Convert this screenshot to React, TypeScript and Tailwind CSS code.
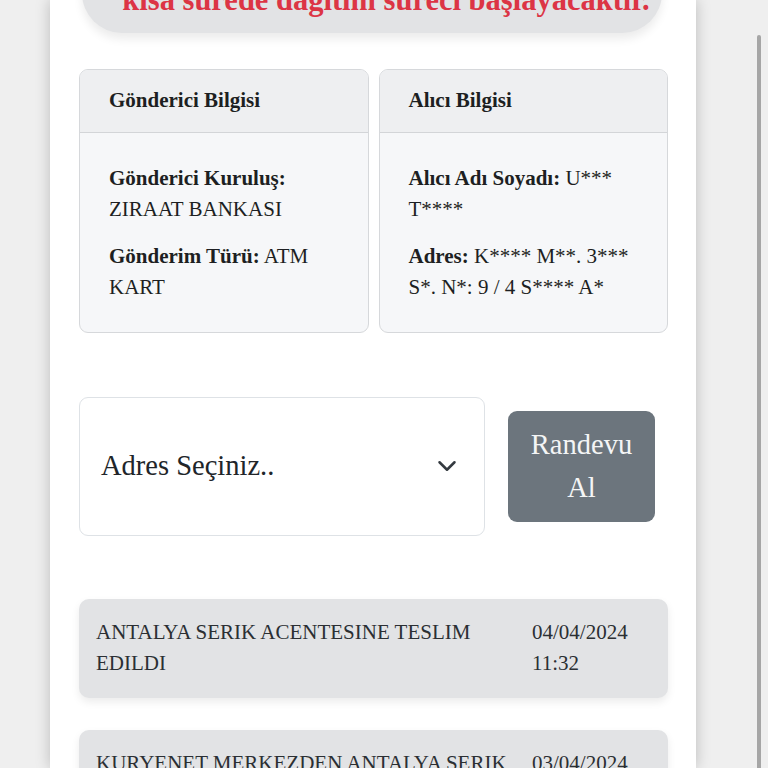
import React from "react";

// ====== Data ======
const timeline = [
  { text: "ANTALYA SERIK ACENTESINE TESLIM EDILDI", date: "04/04/2024", time: "11:32" },
  { text: "KURYENET MERKEZDEN ANTALYA SERIK ACENTESINE SEVK EDILDI", date: "03/04/2024", time: "18:05" },
];

// ====== Small pieces ======
const InfoCard: React.FC<{ title: string; children: React.ReactNode }> = ({ title, children }) => (
  <div className="flex flex-1 flex-col overflow-hidden rounded-[9px] border border-[#d6d8db] bg-[#f6f7f9]">
    <div className="border-b border-[#d3d5d8] bg-[#eeeff1] px-[29px] py-[15px] font-bold">{title}</div>
    <div className="flex flex-1 flex-col gap-[15px] px-[29px] pt-[30px] pb-[28px]">{children}</div>
  </div>
);

const Field: React.FC<{ label: string; value: string }> = ({ label, value }) => (
  <p>
    <span className="font-bold">{label}</span> {value}
  </p>
);

export default function App() {
  return (
    <div
      className="relative h-[768px] overflow-hidden bg-[#efefef] pl-[50px] text-[21px] leading-[1.5] text-[#1d1f22]"
      style={{ fontFamily: '"Liberation Serif", "Times New Roman", serif' }}
    >
      <div className="flex h-full w-[646px] flex-col bg-white pr-[28px] pl-[29px] shadow-[0_0_14px_rgba(0,0,0,0.22)]">
        {/* notice pill */}
        <div className="mt-[-18px] mr-[6px] ml-[3px] rounded-b-[40px] bg-[#e2e3e5] pb-[15px] pl-[28px] text-center text-[30.5px] font-bold leading-[36px] whitespace-nowrap text-[#dc3545] shadow-[0_6px_10px_rgba(0,0,0,0.08)]">
          kısa sürede dağıtım süreci başlayacaktır.
        </div>

        {/* sender / receiver */}
        <div className="mt-[36px] flex gap-[10px]">
          <InfoCard title="Gönderici Bilgisi">
            <Field label="Gönderici Kuruluş:" value="ZIRAAT BANKASI" />
            <Field label="Gönderim Türü:" value="ATM KART" />
          </InfoCard>
          <InfoCard title="Alıcı Bilgisi">
            <Field label="Alıcı Adı Soyadı:" value="U*** T****" />
            <Field label="Adres:" value="K**** M**. 3*** S*. N*: 9 / 4 S**** A*" />
          </InfoCard>
        </div>

        {/* address select + button */}
        <div className="mt-[64px] flex items-center">
          <div className="flex h-[139px] flex-1 items-center justify-between rounded-[9px] border border-[#dee2e6] bg-white pl-[21px] pr-[27px] text-[28.5px] text-[#212529]">
            <span>Adres Seçiniz..</span>
            <svg width="20" height="20" viewBox="0 0 16 16" fill="none" stroke="#343a40" strokeWidth="2" strokeLinecap="round" strokeLinejoin="round">
              <path d="m2 5 6 6 6-6" />
            </svg>
          </div>
          <button className="mr-[13px] ml-[23px] h-[111px] w-[147px] shrink-0 rounded-[9px] bg-[#6c757d] text-[28.5px] leading-[43px] text-[#f4f5f6]">
            Randevu
            <br />
            Al
          </button>
        </div>

        {/* timeline */}
        <div className="mt-[63px] flex flex-col gap-[32px]">
          {timeline.map((t) => (
            <div
              key={t.date}
              className="grid grid-cols-[1fr_119px] rounded-[10px] bg-[#e2e3e5] py-[18px] pr-[17px] pl-[17px] text-[#2b2f33] shadow-[0_4px_8px_rgba(0,0,0,0.08)]"
            >
              <div>{t.text}</div>
              <div>
                {t.date}
                <br />
                {t.time}
              </div>
            </div>
          ))}
        </div>
      </div>

      {/* overlay scrollbar */}
      <div className="absolute top-[35px] right-[7px] h-[760px] w-[4px] rounded-full bg-[#a6a6a6]" />
    </div>
  );
}
